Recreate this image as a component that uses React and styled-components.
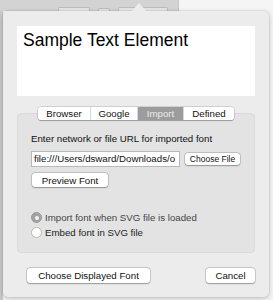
import React from 'react';
import styled, { createGlobalStyle } from 'styled-components';

const GlobalStyle = createGlobalStyle`
  html, body {
    margin: 0;
    padding: 0;
    background: #f5f5f5;
  }
  body {
    font-family: "Liberation Sans", Arial, sans-serif;
  }
`;

const Screen = styled.div`
  position: relative;
  width: 273px;
  height: 300px;
  overflow: hidden;
  background: #f5f5f5;
`;

/* window behind the popover */
const Toolbar = styled.div`
  height: 11px;
  display: flex;
  align-items: flex-end;
  gap: 8px;
  padding-left: 58px;
  width: 120px;
  background: #d3d3d3;
  border-right: 1px solid #c4c4c4;
`;
const ToolbarBox = styled.div`
  width: ${p => p.w}px;
  height: ${p => p.h || 3}px;
  background: #e6e6e6;
  border: 1px solid #bcbcbc;
  border-bottom: none;
  border-radius: 2px 2px 0 0;
`;
const Gutter = styled.div`
  width: 3px;
  height: 289px;
  background: #c9c9c9;
`;

const Popover = styled.div`
  position: absolute;
  left: 3px;
  top: 11px;
  width: 266px;
  height: 286px;
  box-sizing: border-box;
  background: #ececec;
  border-radius: 5px;
  box-shadow: 0 0 0 1px rgba(0, 0, 0, 0.06), 0 2px 6px rgba(0, 0, 0, 0.18);
  padding: 15px 14px 14px;
  display: flex;
  flex-direction: column;
`;
const Arrow = styled.div`
  position: absolute;
  left: 129px;
  top: -8px;
  width: 0;
  height: 0;
  border-left: 7px solid transparent;
  border-right: 7px solid transparent;
  border-bottom: 8px solid #ececec;
`;

const PreviewArea = styled.div`
  height: 70px;
  background: #fff;
  padding: 4px 6px;
  box-sizing: border-box;
  font-size: 17.5px;
  color: #000;
  line-height: 20px;
`;

const TabSection = styled.div`
  margin-top: 11px;
  display: flex;
  flex-direction: column;
  align-items: center;
`;
const TabBar = styled.div`
  position: relative;
  z-index: 1;
  display: flex;
  height: 13px;
  margin-bottom: -7px;
  background: #fff;
  border-radius: 3px;
  box-shadow: 0 0 0 0.5px rgba(0, 0, 0, 0.2), 0 0.5px 1px rgba(0, 0, 0, 0.25);
  overflow: hidden;
`;
const Tab = styled.div`
  width: ${p => p.w}px;
  display: flex;
  align-items: center;
  justify-content: center;
  font-size: 9.7px;
  color: ${p => (p.active ? '#ececec' : '#111')};
  background: ${p => (p.active ? '#9c9c9c' : '#fff')};
  border-left: ${p => (p.first ? 'none' : '1px solid #d8d8d8')};
`;

const GroupBox = styled.div`
  align-self: stretch;
  height: 140px;
  box-sizing: border-box;
  background: #e3e3e3;
  border: 1px solid #dadada;
  border-radius: 4px;
  padding: 19px 13px 0;
  display: flex;
  flex-direction: column;
`;
const Label = styled.div`
  font-size: 9.7px;
  line-height: 12px;
  color: #111;
`;
const FieldRow = styled.div`
  margin-top: 6px;
  display: flex;
  align-items: center;
  gap: 5px;
`;
const TextField = styled.div`
  width: 149px;
  height: 16px;
  box-sizing: border-box;
  background: #fff;
  border: 1px solid #b9b9b9;
  padding: 0 2px;
  font-size: 9.7px;
  line-height: 14px;
  color: #111;
  white-space: nowrap;
  overflow: hidden;
`;
const Button = styled.div`
  height: ${p => p.h || 14}px;
  width: ${p => p.w}px;
  box-sizing: border-box;
  display: flex;
  align-items: center;
  justify-content: center;
  background: #fff;
  border-radius: 3px;
  box-shadow: 0 0 0 0.5px rgba(0, 0, 0, 0.22), 0 0.5px 1.5px rgba(0, 0, 0, 0.28);
  font-size: ${p => p.fs || 9.7}px;
  color: #111;
  white-space: nowrap;
`;
const PreviewButton = styled(Button)`
  margin-top: 6px;
  margin-left: 1px;
`;
const RadioGroup = styled.div`
  margin-top: 23px;
  display: flex;
  flex-direction: column;
`;
const RadioRow = styled.div`
  height: 15px;
  display: flex;
  align-items: center;
  gap: 3px;
  font-size: 9.7px;
  color: ${p => (p.dim ? '#444' : '#222')};
`;
const RadioDot = styled.div`
  width: 11px;
  height: 11px;
  box-sizing: border-box;
  border-radius: 50%;
  display: flex;
  align-items: center;
  justify-content: center;
  background: ${p => (p.checked ? '#a3a3a3' : '#fff')};
  border: 1px solid ${p => (p.checked ? '#9a9a9a' : '#b5b5b5')};
  &::after {
    content: '';
    display: ${p => (p.checked ? 'block' : 'none')};
    width: 4px;
    height: 4px;
    border-radius: 50%;
    background: #f2f2f2;
  }
`;

const Footer = styled.div`
  margin-top: auto;
  display: flex;
  justify-content: space-between;
  padding-left: 10px;
`;

export default function App() {
  return (
    <>
      <GlobalStyle />
      <Screen>
        <Toolbar>
          <ToolbarBox w={30} />
          <ToolbarBox w={10} h={2} />
          <ToolbarBox w={48} />
        </Toolbar>
        <Gutter />
        <Popover>
          <Arrow />
          <PreviewArea>Sample Text Element</PreviewArea>
          <TabSection>
            <TabBar>
              <Tab first w={52}>Browser</Tab>
              <Tab w={46}>Google</Tab>
              <Tab active w={45}>Import</Tab>
              <Tab w={50}>Defined</Tab>
            </TabBar>
            <GroupBox>
              <Label>Enter network or file URL for imported font</Label>
              <FieldRow>
                <TextField>file:///Users/dsward/Downloads/o</TextField>
                <Button w={55} h={12} fs={8.5}>Choose File</Button>
              </FieldRow>
              <PreviewButton w={76}>Preview Font</PreviewButton>
              <RadioGroup>
                <RadioRow dim>
                  <RadioDot checked />
                  Import font when SVG file is loaded
                </RadioRow>
                <RadioRow>
                  <RadioDot />
                  Embed font in SVG file
                </RadioRow>
              </RadioGroup>
            </GroupBox>
          </TabSection>
          <Footer>
            <Button w={123} h={15}>Choose Displayed Font</Button>
            <Button w={49} h={15}>Cancel</Button>
          </Footer>
        </Popover>
      </Screen>
    </>
  );
}
